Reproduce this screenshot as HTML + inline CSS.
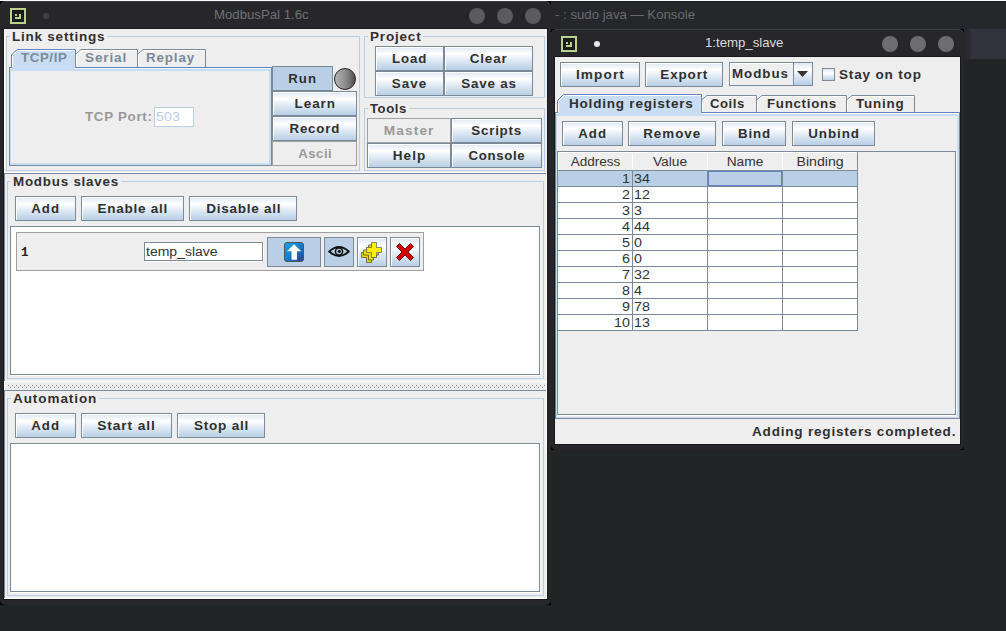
<!DOCTYPE html><html><head><meta charset="utf-8"><style>
*{margin:0;padding:0;box-sizing:border-box}
html,body{width:1006px;height:631px;overflow:hidden;background:#222526;position:relative}
div,span{position:absolute}
span,i{font-family:"Liberation Sans",sans-serif;white-space:nowrap;font-style:normal}
.b{font-weight:bold;font-size:12.5px;color:#303030;line-height:14px;transform:translateY(-11px)}
.r{font-size:12.5px;color:#333;line-height:14px;transform:translateY(-11px)}
.lbl{font-weight:bold;font-size:12.5px;color:#222;letter-spacing:1.3px;line-height:16px;background:linear-gradient(transparent 6px,#eee 6px,#eee 8px,transparent 8px)}
.tb{border:1px solid #b8cfe5}
.btn{border:1px solid #7a8a99;box-shadow:inset 1px 1px 0 #fff;background:linear-gradient(#dde8f3 0%,#fff 30%,#dde8f3 60%,#b8cfe5 100%);display:flex;align-items:center;justify-content:center}
.btn i{display:inline-block;font-weight:bold;font-size:12.5px;color:#303030;line-height:14px}
.sel{background:#b8cfe5;box-shadow:none}
.dis{background:#eee;border-color:#a0a0a0;box-shadow:none}
.dis i{color:#999}
.wt{font-family:"Liberation Sans",sans-serif;font-size:13.2px;line-height:16px;transform:translateY(-12px)}
.circ{border-radius:50%}
</style></head><body>
<div style="left:551px;top:0px;width:455px;height:29px;background:#26272b"></div>
<div style="left:551px;top:1px;width:455px;height:1px;background:#1c1d21"></div>
<div style="left:964px;top:29px;width:42px;height:30px;background:#32333d"></div>
<div style="left:964px;top:29px;width:7px;height:30px;background:linear-gradient(to right,#26272b,#2e2f36)"></div>
<span class="wt" style="left:555px;top:19px;color:#6a6b6e">- : sudo java — Konsole</span>
<div style="left:0px;top:1px;width:7px;height:7px;background:#000"></div>
<div style="left:544px;top:1px;width:7px;height:7px;background:#000"></div>
<div style="left:544px;top:598px;width:7px;height:7px;background:#000"></div>
<div style="left:0px;top:598px;width:7px;height:7px;background:#000"></div>
<div style="left:0px;top:1px;width:551px;height:604px;background:#27272b;border-radius:6px 6px 5px 5px;box-shadow:inset 0 1px 0 #3a3b40"></div>
<div style="left:10px;top:8px;width:16px;height:16px;border:2px solid #b9d48a;background:#1c1d20"></div>
<div style="left:12px;top:10px;width:12px;height:12px;border:1px solid #141517"></div>
<div style="left:15px;top:14px;width:2px;height:2px;background:#b9d48a"></div>
<div style="left:19px;top:14px;width:2px;height:5px;background:#b9d48a"></div>
<div style="left:15px;top:17px;width:6px;height:2px;background:#b9d48a"></div>
<div style="left:43px;top:13px;width:6px;height:6px;background:#3f3f45;border-radius:50%"></div>
<span class="wt" style="left:214px;top:19px;color:#6e7175">ModbusPal 1.6c</span>
<div style="left:469px;top:8px;width:16px;height:16px;background:#5b5b5d;border-radius:50%"></div>
<div style="left:497px;top:8px;width:16px;height:16px;background:#5b5b5d;border-radius:50%"></div>
<div style="left:525px;top:8px;width:16px;height:16px;background:#5b5b5d;border-radius:50%"></div>
<div style="left:4px;top:29px;width:543px;height:570px;background:#eeeeee;box-shadow:0 0 0 1px #18181b"></div>
<div style="left:551px;top:29px;width:7px;height:7px;background:#000"></div>
<div style="left:957px;top:29px;width:7px;height:7px;background:#000"></div>
<div style="left:957px;top:443px;width:7px;height:7px;background:#000"></div>
<div style="left:551px;top:443px;width:7px;height:7px;background:#000"></div>
<div style="left:551px;top:29px;width:413px;height:421px;background:#27272b;border-radius:6px 6px 5px 5px;box-shadow:inset 0 1px 0 #3c3d42"></div>
<div style="left:561px;top:36px;width:16px;height:16px;border:2px solid #b9d48a;background:#1c1d20"></div>
<div style="left:563px;top:38px;width:12px;height:12px;border:1px solid #141517"></div>
<div style="left:566px;top:42px;width:2px;height:2px;background:#b9d48a"></div>
<div style="left:570px;top:42px;width:2px;height:5px;background:#b9d48a"></div>
<div style="left:566px;top:45px;width:6px;height:2px;background:#b9d48a"></div>
<div style="left:594px;top:41px;width:6px;height:6px;background:#e8e8e8;border-radius:50%"></div>
<span class="wt" style="left:705px;top:47px;color:#dcdcdc">1:temp_slave</span>
<div style="left:882px;top:36px;width:16px;height:16px;background:#6e6e70;border-radius:50%"></div>
<div style="left:910px;top:36px;width:16px;height:16px;background:#6e6e70;border-radius:50%"></div>
<div style="left:938px;top:36px;width:16px;height:16px;background:#6e6e70;border-radius:50%"></div>
<div style="left:555px;top:57px;width:405px;height:387px;background:#eeeeee;box-shadow:0 0 0 1px #18181b"></div>
<div style="left:4px;top:29px;width:1px;height:144px;background:#fff"></div>
<div class="tb" style="left:6px;top:36px;width:354px;height:135px"></div>
<div style="left:9.5px;top:35px;width:97.4px;height:3px;background:#eee"></div>
<span class="b" style="left:11.5px;top:41px;transform:translateY(-11px) scaleX(1.080);transform-origin:0 0;letter-spacing:0.71px">Link settings</span>
<div style="left:9px;top:67px;width:263px;height:99px;border:1px solid #6382bf;border-right-color:#7a8a99;border-bottom-color:#7a8a99;background:#c8ddf2"></div>
<div style="left:10px;top:68px;width:261px;height:1px;background:#fff"></div>
<div style="left:11px;top:71px;width:258px;height:92px;background:#eee"></div>
<svg style="position:absolute;left:0;top:0" width="300" height="80"><path d="M11.5 67.5 V55 L17 49.5 H75.5 V68" fill="#c8ddf2" stroke="#6382bf" stroke-width="1"/><path d="M12.5 67 V55.5 L17.5 50.5 H74.5" fill="none" stroke="#fff" stroke-width="1"/><path d="M75.5 67 V54.5 L81 49.5 H137.5 V67.5" fill="#eee" stroke="#7a8a99" stroke-width="1"/><path d="M76.5 66 V55 L81.5 50.5 H136.5" fill="none" stroke="#fff" stroke-width="1"/><path d="M137.5 67 V54.5 L143 49.5 H205.5 V67.5" fill="#eee" stroke="#7a8a99" stroke-width="1"/><path d="M138.5 66 V55 L143.5 50.5 H204.5" fill="none" stroke="#fff" stroke-width="1"/><path d="M75 67.5 H271" stroke="#6382bf" stroke-width="1"/><rect x="12" y="67" width="63" height="4" fill="#c8ddf2"/></svg>
<span class="b" style="left:21px;top:62px;transform:translateY(-11px) scaleX(1.055);transform-origin:0 0;letter-spacing:0.63px;color:#7a8a99">TCP/IP</span>
<span class="b" style="left:85px;top:62px;transform:translateY(-11px) scaleX(1.084);transform-origin:0 0;letter-spacing:0.79px;color:#7a8a99">Serial</span>
<span class="b" style="left:146px;top:62px;transform:translateY(-11px) scaleX(1.070);transform-origin:0 0;letter-spacing:0.80px;color:#7a8a99">Replay</span>
<span class="b" style="left:85px;top:121px;transform:translateY(-11px) scaleX(1.066);transform-origin:0 0;letter-spacing:0.67px;color:#999">TCP Port:</span>
<div style="left:154px;top:107px;width:40px;height:20px;background:#fff;border:1px solid #b8cfe5"></div>
<span class="r" style="left:156px;top:121px;transform:translateY(-11px) scaleX(1.142);transform-origin:0 0;letter-spacing:0.00px;color:#b8cfe5">503</span>
<div class="btn sel" style="left:272px;top:66px;width:61px;height:25px"><i style="transform:scaleX(1.057);letter-spacing:0.98px;margin-right:-0.98px;">Run</i></div>
<div style="left:334px;top:68px;width:22px;height:22px;border-radius:50%;border:1.5px solid #222;background:linear-gradient(to right,#b4b4b4 0%,#8a8a8a 55%,#505050 100%)"></div>
<div class="btn" style="left:272px;top:91px;width:85px;height:25px"><i style="transform:scaleX(1.075);letter-spacing:0.89px;margin-right:-0.89px;">Learn</i></div>
<div class="btn" style="left:272px;top:116px;width:85px;height:25px"><i style="transform:scaleX(1.063);letter-spacing:0.76px;margin-right:-0.76px;">Record</i></div>
<div class="btn dis" style="left:272px;top:141px;width:85px;height:25px"><i style="transform:scaleX(1.049);letter-spacing:0.52px;margin-right:-0.52px;">Ascii</i></div>
<div class="tb" style="left:364px;top:36px;width:181px;height:62px"></div>
<div style="left:367.5px;top:35px;width:55.7px;height:3px;background:#eee"></div>
<span class="b" style="left:369.5px;top:41px;transform:translateY(-11px) scaleX(1.078);transform-origin:0 0;letter-spacing:0.77px">Project</span>
<div class="btn" style="left:375px;top:46px;width:69px;height:25px"><i style="transform:scaleX(1.060);letter-spacing:0.85px;margin-right:-0.85px;">Load</i></div>
<div class="btn" style="left:444px;top:46px;width:89px;height:25px"><i style="transform:scaleX(1.073);letter-spacing:0.80px;margin-right:-0.80px;">Clear</i></div>
<div class="btn" style="left:375px;top:71px;width:69px;height:25px"><i style="transform:scaleX(1.073);letter-spacing:0.99px;margin-right:-0.99px;">Save</i></div>
<div class="btn" style="left:444px;top:71px;width:89px;height:25px"><i style="transform:scaleX(1.072);letter-spacing:0.78px;margin-right:-0.78px;">Save as</i></div>
<div class="tb" style="left:364px;top:108px;width:181px;height:63px"></div>
<div style="left:367.5px;top:107px;width:41.2px;height:3px;background:#eee"></div>
<span class="b" style="left:369.5px;top:113px;transform:translateY(-11px) scaleX(1.047);transform-origin:0 0;letter-spacing:0.55px">Tools</span>
<div class="btn dis" style="left:367px;top:118px;width:84px;height:25px"><i style="transform:scaleX(1.092);letter-spacing:1.02px;margin-right:-1.02px;">Master</i></div>
<div class="btn" style="left:451px;top:118px;width:91px;height:25px"><i style="transform:scaleX(1.071);letter-spacing:0.70px;margin-right:-0.70px;">Scripts</i></div>
<div class="btn" style="left:367px;top:143px;width:84px;height:25px"><i style="transform:scaleX(1.081);letter-spacing:1.02px;margin-right:-1.02px;">Help</i></div>
<div class="btn" style="left:451px;top:143px;width:91px;height:25px"><i style="transform:scaleX(1.056);letter-spacing:0.65px;margin-right:-0.65px;">Console</i></div>
<div style="left:4px;top:173px;width:542px;height:1px;background:#7a8a99"></div>
<div style="left:4px;top:172px;width:542px;height:1px;background:#fff"></div>
<div style="left:4px;top:174px;width:1px;height:207px;background:#7a8a99"></div>
<div style="left:4px;top:381px;width:1px;height:9px;background:#fff"></div>
<div class="tb" style="left:7px;top:181px;width:537px;height:198px"></div>
<div style="left:10.5px;top:180px;width:110.2px;height:3px;background:#eee"></div>
<span class="b" style="left:12.5px;top:186px;transform:translateY(-11px) scaleX(1.069);transform-origin:0 0;letter-spacing:0.73px">Modbus slaves</span>
<div class="btn" style="left:15px;top:196px;width:61px;height:25px"><i style="transform:scaleX(1.059);letter-spacing:1.02px;margin-right:-1.02px;">Add</i></div>
<div class="btn" style="left:81px;top:196px;width:103px;height:25px"><i style="transform:scaleX(1.079);letter-spacing:0.71px;margin-right:-0.71px;">Enable all</i></div>
<div class="btn" style="left:189px;top:196px;width:108px;height:25px"><i style="transform:scaleX(1.082);letter-spacing:0.70px;margin-right:-0.70px;">Disable all</i></div>
<div style="left:10px;top:226px;width:530px;height:149px;border:1px solid #7a8a99;background:#fff;box-shadow:1px 1px 0 #fff"></div>
<div style="left:16px;top:232px;width:408px;height:39px;background:#eee;border:1px solid #a0a0a0"></div>
<span style="left:21px;top:246px;font-family:'Liberation Mono',monospace;font-weight:bold;font-size:12.5px;color:#222;line-height:14px">1</span>
<div style="left:145px;top:243px;width:119px;height:19px;border:1px solid #fff;background:#fff"></div>
<div style="left:144px;top:242px;width:119px;height:19px;border:1px solid #7a8a99"></div>
<span class="r" style="left:146px;top:256px;transform:translateY(-11px) scaleX(1.120);transform-origin:0 0;letter-spacing:0.00px;color:#333">temp_slave</span>
<div class="btn sel" style="left:267px;top:237px;width:54px;height:30px"><i style="transform:scaleX(1);letter-spacing:0px;margin-right:-0px;"></i></div>
<div class="btn sel" style="left:324px;top:237px;width:30px;height:30px"><i style="transform:scaleX(1);letter-spacing:0px;margin-right:-0px;"></i></div>
<div class="btn" style="left:357px;top:237px;width:30px;height:30px"><i style="transform:scaleX(1);letter-spacing:0px;margin-right:-0px;"></i></div>
<div class="btn" style="left:390px;top:237px;width:30px;height:30px"><i style="transform:scaleX(1);letter-spacing:0px;margin-right:-0px;"></i></div>
<svg style="position:absolute;left:284px;top:242px" width="20" height="20" viewBox="0 0 20 20"><defs><linearGradient id="gb" x1="0" y1="0" x2="1" y2="1"><stop offset="0" stop-color="#19a8ec"/><stop offset="0.55" stop-color="#137ac8"/><stop offset="1" stop-color="#2b3a86"/></linearGradient></defs><rect x="0.5" y="0.5" width="19" height="19" rx="2.5" fill="url(#gb)" stroke="#555" stroke-width="1"/><path d="M10 2.3 L17.3 9.3 H13 V17.7 H7.5 V9.3 H3 Z" fill="#fff"/></svg>
<svg style="position:absolute;left:328px;top:245px" width="22" height="13" viewBox="0 0 22 13"><path d="M1.2 6.5 Q11 -2.5 20.8 6.5 Q11 15.5 1.2 6.5 Z" fill="none" stroke="#111" stroke-width="1.8"/><circle cx="11" cy="6.5" r="3.6" fill="none" stroke="#111" stroke-width="1.6"/><circle cx="11.3" cy="6.3" r="1.6" fill="#111"/></svg>
<svg style="position:absolute;left:360px;top:240px" width="26" height="24" viewBox="0 0 26 24"><defs><path id="pl" d="M0 5 h5 v-5 h5 v5 h5 v5 h-5 v5 h-5 v-5 h-5 z"/></defs><use href="#pl" x="1.5" y="7.5" fill="#e8d800" stroke="#444" stroke-width="0.7"/><use href="#pl" x="3.5" y="5" fill="#f0e000" stroke="#444" stroke-width="0.7"/><use href="#pl" x="6.5" y="2.5" fill="#ffef00" stroke="#555" stroke-width="0.7"/></svg>
<svg style="position:absolute;left:395px;top:242px" width="20" height="20" viewBox="0 0 20 20"><path d="M1.5 4.5 L4.5 1.5 L10 7 L15.5 1.5 L18.5 4.5 L13 10 L18.5 15.5 L15.5 18.5 L10 13 L4.5 18.5 L1.5 15.5 L7 10 Z" fill="#d40000" stroke="#5a0000" stroke-width="0.9" stroke-linejoin="round"/></svg>
<div style="left:4px;top:381px;width:542px;height:1px;background:#fff"></div>
<svg style="position:absolute;left:5px;top:382px" width="541" height="8"><defs><pattern id="dots" x="3" y="3" width="4" height="4" patternUnits="userSpaceOnUse"><rect x="0" y="0" width="1" height="1" fill="#7a8a99"/><rect x="2" y="2" width="1" height="1" fill="#7a8a99"/></pattern></defs><rect x="3" y="3" width="538" height="3" fill="url(#dots)"/></svg>
<div style="left:4px;top:390px;width:542px;height:1px;background:#7a8a99"></div>
<div style="left:4px;top:391px;width:1px;height:208px;background:#7a8a99"></div>
<div style="left:546px;top:174px;width:1px;height:425px;background:#fff"></div>
<div style="left:4px;top:598px;width:543px;height:1px;background:#fff"></div>
<div class="tb" style="left:7px;top:398px;width:537px;height:198px"></div>
<div style="left:10.5px;top:397px;width:88.4px;height:3px;background:#eee"></div>
<span class="b" style="left:12.5px;top:403px;transform:translateY(-11px) scaleX(1.080);transform-origin:0 0;letter-spacing:0.86px">Automation</span>
<div class="btn" style="left:15px;top:413px;width:61px;height:25px"><i style="transform:scaleX(1.059);letter-spacing:1.02px;margin-right:-1.02px;">Add</i></div>
<div class="btn" style="left:81px;top:413px;width:91px;height:25px"><i style="transform:scaleX(1.103);letter-spacing:0.80px;margin-right:-0.80px;">Start all</i></div>
<div class="btn" style="left:177px;top:413px;width:88px;height:25px"><i style="transform:scaleX(1.083);letter-spacing:0.74px;margin-right:-0.74px;">Stop all</i></div>
<div style="left:10px;top:443px;width:530px;height:149px;border:1px solid #7a8a99;background:#fff;box-shadow:1px 1px 0 #fff"></div>
<div class="btn" style="left:560px;top:62px;width:80px;height:25px"><i style="transform:scaleX(1.093);letter-spacing:1.00px;margin-right:-1.00px;">Import</i></div>
<div class="btn" style="left:645px;top:62px;width:78px;height:25px"><i style="transform:scaleX(1.074);letter-spacing:0.81px;margin-right:-0.81px;">Export</i></div>
<div style="left:729px;top:62px;width:84px;height:24px;border:1px solid #7a8a99;background:linear-gradient(#dde8f3 0%,#fff 30%,#dde8f3 60%,#b8cfe5 100%)"></div>
<div style="left:730px;top:63px;width:64px;height:22px;background:#eee;border-right:1px solid #7a8a99;box-shadow:inset 1px 1px 0 #fff"></div>
<span class="b" style="left:732px;top:78px;transform:translateY(-11px) scaleX(1.067);transform-origin:0 0;letter-spacing:0.91px;">Modbus</span>
<svg style="position:absolute;left:796px;top:70px" width="14" height="8"><path d="M1 1 H12 L6.5 7 Z" fill="#333"/></svg>
<div style="left:822px;top:68px;width:13px;height:13px;border:1px solid #7a8a99;background:linear-gradient(#dde8f3,#fff 40%,#b8cfe5)"></div>
<span class="b" style="left:839px;top:79px;transform:translateY(-11px) scaleX(1.081);transform-origin:0 0;letter-spacing:0.77px;">Stay on top</span>
<div style="left:555px;top:112px;width:405px;height:307px;border:1px solid #6382bf;border-right-color:#7a8a99;border-bottom-color:#7a8a99;background:#c8ddf2"></div>
<div style="left:556px;top:113px;width:403px;height:1px;background:#fff"></div>
<div style="left:557px;top:116px;width:400px;height:301px;background:#eee"></div>
<svg style="position:absolute;left:540px;top:80px" width="420" height="50"><path d="M17.5 32.5 V20.5 L23.5 14.5 H161.5 V33" fill="#c8ddf2" stroke="#6382bf" stroke-width="1"/><path d="M18.5 32 V21 L24 15.5 H160.5" fill="none" stroke="#fff" stroke-width="1"/><path d="M161.5 32 V20 L167 15.5 H216.5 V32.5" fill="#eee" stroke="#7a8a99" stroke-width="1"/><path d="M162.5 31 V20.5 L167.5 16.5 H215.5" fill="none" stroke="#fff" stroke-width="1"/><path d="M216.5 32 V20 L222 15.5 H306.5 V32.5" fill="#eee" stroke="#7a8a99" stroke-width="1"/><path d="M217.5 31 V20.5 L222.5 16.5 H305.5" fill="none" stroke="#fff" stroke-width="1"/><path d="M306.5 32 V20 L312 15.5 H374.5 V32.5" fill="#eee" stroke="#7a8a99" stroke-width="1"/><path d="M307.5 31 V20.5 L312.5 16.5 H373.5" fill="none" stroke="#fff" stroke-width="1"/><path d="M161 32.5 H420" stroke="#6382bf" stroke-width="1"/><rect x="18" y="32" width="143" height="4" fill="#c8ddf2"/></svg>
<span class="b" style="left:569px;top:108px;transform:translateY(-11px) scaleX(1.081);transform-origin:0 0;letter-spacing:0.73px;">Holding registers</span>
<span class="b" style="left:710px;top:108px;transform:translateY(-11px) scaleX(1.048);transform-origin:0 0;letter-spacing:0.52px;">Coils</span>
<span class="b" style="left:767px;top:108px;transform:translateY(-11px) scaleX(1.063);transform-origin:0 0;letter-spacing:0.67px;">Functions</span>
<span class="b" style="left:856px;top:108px;transform:translateY(-11px) scaleX(1.068);transform-origin:0 0;letter-spacing:0.78px;">Tuning</span>
<div class="btn" style="left:562px;top:121px;width:61px;height:25px"><i style="transform:scaleX(1.059);letter-spacing:1.02px;margin-right:-1.02px;">Add</i></div>
<div class="btn" style="left:628px;top:121px;width:88px;height:25px"><i style="transform:scaleX(1.069);letter-spacing:0.95px;margin-right:-0.95px;">Remove</i></div>
<div class="btn" style="left:722px;top:121px;width:64px;height:25px"><i style="transform:scaleX(1.062);letter-spacing:0.81px;margin-right:-0.81px;">Bind</i></div>
<div class="btn" style="left:792px;top:121px;width:83px;height:25px"><i style="transform:scaleX(1.072);letter-spacing:0.86px;margin-right:-0.86px;">Unbind</i></div>
<div style="left:557px;top:151px;width:399px;height:264px;border:1px solid #7a8a99;background:#eee;box-shadow:1px 1px 0 #fff"></div>
<div style="left:558px;top:152px;width:75px;height:19px;background:#eee;border-right:1px solid #7a8a99;border-bottom:1px solid #7a8a99;box-shadow:inset 1px 1px 0 #fff"></div>
<div style="left:632px;top:152px;width:76px;height:19px;background:#eee;border-right:1px solid #7a8a99;border-bottom:1px solid #7a8a99;box-shadow:inset 1px 1px 0 #fff"></div>
<div style="left:707px;top:152px;width:76px;height:19px;background:#eee;border-right:1px solid #7a8a99;border-bottom:1px solid #7a8a99;box-shadow:inset 1px 1px 0 #fff"></div>
<div style="left:782px;top:152px;width:76px;height:19px;background:#eee;border-right:1px solid #7a8a99;border-bottom:1px solid #7a8a99;box-shadow:inset 1px 1px 0 #fff"></div>
<span class="r" style="left:558px;top:166px;transform:translateY(-11px) scaleX(1.084);transform-origin:50% 0;letter-spacing:0.00px;width:74px;text-align:center;padding-left:1px">Address</span>
<span class="r" style="left:632px;top:166px;transform:translateY(-11px) scaleX(1.104);transform-origin:50% 0;letter-spacing:0.00px;width:75px;text-align:center;padding-left:1px">Value</span>
<span class="r" style="left:707px;top:166px;transform:translateY(-11px) scaleX(1.104);transform-origin:50% 0;letter-spacing:0.00px;width:75px;text-align:center;padding-left:1px">Name</span>
<span class="r" style="left:782px;top:166px;transform:translateY(-11px) scaleX(1.131);transform-origin:50% 0;letter-spacing:0.00px;width:75px;text-align:center;padding-left:1px">Binding</span>
<div style="left:558px;top:171px;width:300px;height:16px;background:#b8cfe5;border-right:1px solid #7a8a99;border-bottom:1px solid #7a8a99"></div>
<div style="left:632px;top:171px;width:1px;height:16px;background:#7a8a99"></div>
<div style="left:707px;top:171px;width:1px;height:16px;background:#7a8a99"></div>
<div style="left:782px;top:171px;width:1px;height:16px;background:#7a8a99"></div>
<span class="r" style="left:560px;top:183px;transform:translateY(-11px) scaleX(1.143);transform-origin:100% 0;letter-spacing:-0.00px;width:70px;text-align:right">1</span>
<span class="r" style="left:634px;top:183px;transform:translateY(-11px) scaleX(1.143);transform-origin:0 0;letter-spacing:-0.00px;">34</span>
<div style="left:558px;top:187px;width:300px;height:16px;background:#fff;border-right:1px solid #7a8a99;border-bottom:1px solid #7a8a99"></div>
<div style="left:632px;top:187px;width:1px;height:16px;background:#7a8a99"></div>
<div style="left:707px;top:187px;width:1px;height:16px;background:#7a8a99"></div>
<div style="left:782px;top:187px;width:1px;height:16px;background:#7a8a99"></div>
<span class="r" style="left:560px;top:199px;transform:translateY(-11px) scaleX(1.143);transform-origin:100% 0;letter-spacing:-0.00px;width:70px;text-align:right">2</span>
<span class="r" style="left:634px;top:199px;transform:translateY(-11px) scaleX(1.143);transform-origin:0 0;letter-spacing:-0.00px;">12</span>
<div style="left:558px;top:203px;width:300px;height:16px;background:#fff;border-right:1px solid #7a8a99;border-bottom:1px solid #7a8a99"></div>
<div style="left:632px;top:203px;width:1px;height:16px;background:#7a8a99"></div>
<div style="left:707px;top:203px;width:1px;height:16px;background:#7a8a99"></div>
<div style="left:782px;top:203px;width:1px;height:16px;background:#7a8a99"></div>
<span class="r" style="left:560px;top:215px;transform:translateY(-11px) scaleX(1.143);transform-origin:100% 0;letter-spacing:-0.00px;width:70px;text-align:right">3</span>
<span class="r" style="left:634px;top:215px;transform:translateY(-11px) scaleX(1.143);transform-origin:0 0;letter-spacing:-0.00px;">3</span>
<div style="left:558px;top:219px;width:300px;height:16px;background:#fff;border-right:1px solid #7a8a99;border-bottom:1px solid #7a8a99"></div>
<div style="left:632px;top:219px;width:1px;height:16px;background:#7a8a99"></div>
<div style="left:707px;top:219px;width:1px;height:16px;background:#7a8a99"></div>
<div style="left:782px;top:219px;width:1px;height:16px;background:#7a8a99"></div>
<span class="r" style="left:560px;top:231px;transform:translateY(-11px) scaleX(1.143);transform-origin:100% 0;letter-spacing:-0.00px;width:70px;text-align:right">4</span>
<span class="r" style="left:634px;top:231px;transform:translateY(-11px) scaleX(1.143);transform-origin:0 0;letter-spacing:-0.00px;">44</span>
<div style="left:558px;top:235px;width:300px;height:16px;background:#fff;border-right:1px solid #7a8a99;border-bottom:1px solid #7a8a99"></div>
<div style="left:632px;top:235px;width:1px;height:16px;background:#7a8a99"></div>
<div style="left:707px;top:235px;width:1px;height:16px;background:#7a8a99"></div>
<div style="left:782px;top:235px;width:1px;height:16px;background:#7a8a99"></div>
<span class="r" style="left:560px;top:247px;transform:translateY(-11px) scaleX(1.143);transform-origin:100% 0;letter-spacing:-0.00px;width:70px;text-align:right">5</span>
<span class="r" style="left:634px;top:247px;transform:translateY(-11px) scaleX(1.143);transform-origin:0 0;letter-spacing:-0.00px;">0</span>
<div style="left:558px;top:251px;width:300px;height:16px;background:#fff;border-right:1px solid #7a8a99;border-bottom:1px solid #7a8a99"></div>
<div style="left:632px;top:251px;width:1px;height:16px;background:#7a8a99"></div>
<div style="left:707px;top:251px;width:1px;height:16px;background:#7a8a99"></div>
<div style="left:782px;top:251px;width:1px;height:16px;background:#7a8a99"></div>
<span class="r" style="left:560px;top:263px;transform:translateY(-11px) scaleX(1.143);transform-origin:100% 0;letter-spacing:-0.00px;width:70px;text-align:right">6</span>
<span class="r" style="left:634px;top:263px;transform:translateY(-11px) scaleX(1.143);transform-origin:0 0;letter-spacing:-0.00px;">0</span>
<div style="left:558px;top:267px;width:300px;height:16px;background:#fff;border-right:1px solid #7a8a99;border-bottom:1px solid #7a8a99"></div>
<div style="left:632px;top:267px;width:1px;height:16px;background:#7a8a99"></div>
<div style="left:707px;top:267px;width:1px;height:16px;background:#7a8a99"></div>
<div style="left:782px;top:267px;width:1px;height:16px;background:#7a8a99"></div>
<span class="r" style="left:560px;top:279px;transform:translateY(-11px) scaleX(1.143);transform-origin:100% 0;letter-spacing:-0.00px;width:70px;text-align:right">7</span>
<span class="r" style="left:634px;top:279px;transform:translateY(-11px) scaleX(1.143);transform-origin:0 0;letter-spacing:-0.00px;">32</span>
<div style="left:558px;top:283px;width:300px;height:16px;background:#fff;border-right:1px solid #7a8a99;border-bottom:1px solid #7a8a99"></div>
<div style="left:632px;top:283px;width:1px;height:16px;background:#7a8a99"></div>
<div style="left:707px;top:283px;width:1px;height:16px;background:#7a8a99"></div>
<div style="left:782px;top:283px;width:1px;height:16px;background:#7a8a99"></div>
<span class="r" style="left:560px;top:295px;transform:translateY(-11px) scaleX(1.143);transform-origin:100% 0;letter-spacing:-0.00px;width:70px;text-align:right">8</span>
<span class="r" style="left:634px;top:295px;transform:translateY(-11px) scaleX(1.143);transform-origin:0 0;letter-spacing:-0.00px;">4</span>
<div style="left:558px;top:299px;width:300px;height:16px;background:#fff;border-right:1px solid #7a8a99;border-bottom:1px solid #7a8a99"></div>
<div style="left:632px;top:299px;width:1px;height:16px;background:#7a8a99"></div>
<div style="left:707px;top:299px;width:1px;height:16px;background:#7a8a99"></div>
<div style="left:782px;top:299px;width:1px;height:16px;background:#7a8a99"></div>
<span class="r" style="left:560px;top:311px;transform:translateY(-11px) scaleX(1.143);transform-origin:100% 0;letter-spacing:-0.00px;width:70px;text-align:right">9</span>
<span class="r" style="left:634px;top:311px;transform:translateY(-11px) scaleX(1.143);transform-origin:0 0;letter-spacing:-0.00px;">78</span>
<div style="left:558px;top:315px;width:300px;height:16px;background:#fff;border-right:1px solid #7a8a99;border-bottom:1px solid #7a8a99"></div>
<div style="left:632px;top:315px;width:1px;height:16px;background:#7a8a99"></div>
<div style="left:707px;top:315px;width:1px;height:16px;background:#7a8a99"></div>
<div style="left:782px;top:315px;width:1px;height:16px;background:#7a8a99"></div>
<span class="r" style="left:560px;top:327px;transform:translateY(-11px) scaleX(1.143);transform-origin:100% 0;letter-spacing:-0.00px;width:70px;text-align:right">10</span>
<span class="r" style="left:634px;top:327px;transform:translateY(-11px) scaleX(1.143);transform-origin:0 0;letter-spacing:-0.00px;">13</span>
<div style="left:708px;top:171px;width:74px;height:15px;border:1px solid #6382bf"></div>
<span class="b" style="left:752px;top:436px;transform:translateY(-11px) scaleX(1.082);transform-origin:0 0;letter-spacing:0.74px;">Adding registers completed.</span>
<div style="left:0px;top:0px;width:1006px;height:1px;background:#fcfcfc"></div>
</body></html>
